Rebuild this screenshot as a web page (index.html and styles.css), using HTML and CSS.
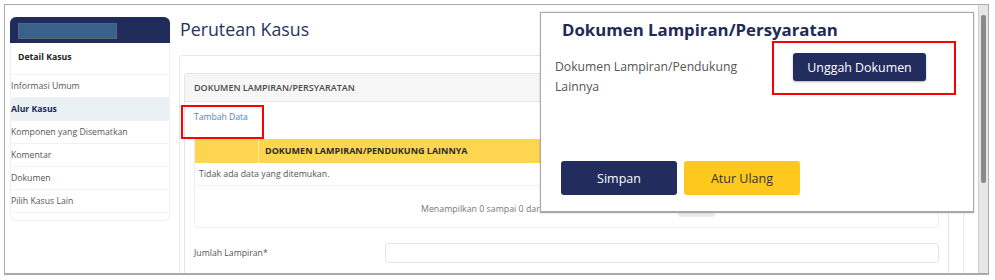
FILE: index.html
```html
<!DOCTYPE html>
<html lang="id">
<head>
    <meta charset="UTF-8">
    <title>Perutean Kasus</title>
    <link rel="stylesheet" href="styles.css">
</head>
<body>
<div class="frame">
    <div class="layout">
        <aside class="sidebar">
            <div class="sidebar-head"><div class="sidebar-logo"></div></div>
            <div class="sidebar-title">Detail Kasus</div>
            <ul class="menu">
                <li>Informasi Umum</li>
                <li class="active">Alur Kasus</li>
                <li>Komponen yang Disematkan</li>
                <li>Komentar</li>
                <li>Dokumen</li>
                <li>Pilih Kasus Lain</li>
            </ul>
        </aside>

        <main class="content">
            <h1 class="page-title">Perutean Kasus</h1>
            <div class="card">
                <div class="panel">
                    <div class="panel-head">DOKUMEN LAMPIRAN/PERSYARATAN</div>
                    <div class="panel-body">
                        <a class="add-link" href="#">Tambah Data</a>
                        <div class="grid">
                            <div class="grid-head">
                                <div class="col-no"></div>
                                <div class="col-doc">DOKUMEN LAMPIRAN/PENDUKUNG LAINNYA</div>
                            </div>
                            <div class="grid-empty">Tidak ada data yang ditemukan.</div>
                            <div class="grid-foot">
                                <span class="summary">Menampilkan 0 sampai 0 dari 0 data</span>
                                <span class="pager"></span>
                            </div>
                        </div>
                        <div class="form-row">
                            <label>Jumlah Lampiran*</label>
                            <div class="input"></div>
                        </div>
                    </div>
                </div>
            </div>
        </main>

        <div class="scrollbar"><div class="thumb"></div></div>
    </div>

    <div class="mark mark-add"></div>

    <div class="modal">
        <h2 class="modal-title">Dokumen Lampiran/Persyaratan</h2>
        <div class="modal-row">
            <p class="modal-label">Dokumen Lampiran/Pendukung Lainnya</p>
            <button class="btn btn-navy btn-upload">Unggah Dokumen</button>
        </div>
        <div class="modal-actions">
            <button class="btn btn-navy btn-wide">Simpan</button>
            <button class="btn btn-yellow btn-wide">Atur Ulang</button>
        </div>
        <div class="mark mark-upload"></div>
    </div>
</div>
</body>
</html>
```

FILE: styles.css
```css
body {
    margin: 0;
    padding: 4px;
    font-family: 'Open Sans', sans-serif;
    background: #ffffff;
    color: #555;
}
.frame {
    position: relative;
    width: 983px;
    height: 268px;
    border: 1px solid #aaa;
    border-width: 1px 1px 2px 1px;
    overflow: hidden;
}
.layout {
    display: flex;
    height: 100%;
}

/* sidebar */
.sidebar {
    width: 158px;
    margin: 12px 0 0 5px;
    height: 203px;
    border: 1px solid #eef0f2;
    border-top: none;
    border-radius: 6px;
    flex-shrink: 0;
}
.sidebar-head {
    height: 26px;
    background: #222c5b;
    border-radius: 6px 6px 0 0;
    padding: 6px 0 0 8px;
    box-sizing: border-box;
    margin: 0 -1px;
}
.sidebar-logo {
    width: 97px;
    height: 14px;
    background: #3a6189;
    border: 1px solid #5a6478;
}
.sidebar-title {
    height: 31px;
    line-height: 29px;
    padding-left: 7px;
    font-size: 8.7px;
    font-weight: 700;
    color: #222;
    border-bottom: 1px solid #f3f3f3;
}
.menu {
    list-style: none;
    margin: 0;
    padding: 0;
}
.menu li {
    height: 22px;
    line-height: 22px;
    font-size: 8.7px;
    color: #555;
    border-bottom: 1px solid #f3f3f3;
    white-space: nowrap;
}
.menu li.active {
    background: #e9f1f5;
    color: #1c2a55;
    font-weight: 700;
}

/* main */
.content {
    flex: 1;
    margin-left: 9px;
    min-width: 0;
}
.page-title {
    margin: 10px 0 0 1px;
    height: 40px;
    font-size: 17.8px;
    font-weight: 400;
    color: #27345e;
    line-height: 28px;
}
.card {
    margin-right: 14px;
    border: 1px solid #e6e8ea;
    border-radius: 3px;
    padding: 17px 14px 0 4px;
    height: 230px;
}
.panel {
    border: 1px solid #e3e5e7;
    border-radius: 3px;
    height: 100%;
}
.panel-head {
    height: 27px;
    line-height: 27px;
    background: #f6f6f7;
    border-bottom: 1px solid #e3e5e7;
    padding-left: 9px;
    font-size: 9px;
    font-weight: 600;
    color: #4a4a4a;
}
.panel-body {
    padding: 0 9px;
}
.add-link {
    display: block;
    height: 37px;
    line-height: 30px;
    font-size: 8.6px;
    color: #3b86d6;
    text-decoration: none;
}
.grid {
    border: 1px solid #eceef0;
    border-top: none;
    border-radius: 0 0 4px 4px;
    height: 88px;
}
.grid-head {
    display: flex;
    height: 24px;
    background: #fdd54f;
    font-size: 9px;
    font-weight: 700;
    color: #2b2b2b;
    line-height: 24px;
}
.col-no {
    width: 63px;
    border-right: 1px solid #fbe9a8;
}
.col-doc {
    padding-left: 6px;
}
.grid-empty {
    height: 22px;
    line-height: 22px;
    padding-left: 4px;
    font-size: 8.8px;
    color: #555;
    border-bottom: 1px solid #f3f3f3;
}
.grid-foot {
    display: flex;
    align-items: flex-start;
    padding: 15px 0 0 226px;
    font-size: 8.8px;
    color: #777;
}
.summary {
    width: 257px;
    line-height: 16px;
    white-space: nowrap;
}
.pager {
    width: 37px;
    height: 16px;
    background: #e9ecef;
    border-radius: 3px;
}
.form-row {
    display: flex;
    align-items: center;
    margin-top: 15px;
}
.form-row label {
    width: 191px;
    font-size: 8.7px;
    color: #555;
}
.input {
    flex: 1;
    height: 18px;
    border: 1px solid #e3e6e9;
    border-radius: 3px;
}

/* scrollbar */
.scrollbar {
    width: 9px;
    background: #e6e6e6;
    border-left: 1px solid #d0d0d0;
    flex-shrink: 0;
    padding-top: 10px;
}
.thumb {
    width: 5px;
    height: 168px;
    margin-left: 2px;
    background: #8a8a8a;
    border-radius: 2px;
}

/* annotations */
.mark {
    position: absolute;
    border: 2px solid #ff0000;
    box-sizing: border-box;
}
.mark-add {
    left: 176px;
    top: 100px;
    width: 83px;
    height: 34px;
}

/* modal */
.modal {
    position: absolute;
    left: 535px;
    top: 7px;
    width: 432px;
    height: 198px;
    background: #fff;
    border: 1px solid #a8a8a8;
    border-bottom-width: 2px;
    box-shadow: 0 0 2px rgba(0, 0, 0, 0.2);
}
.modal-title {
    margin: 5px 0 0 21px;
    font-size: 16.8px;
    font-weight: 700;
    color: #1f2a55;
    line-height: 24px;
}
.modal-row {
    display: flex;
    align-items: flex-start;
    margin-top: 11px;
}
.modal-label {
    width: 200px;
    margin: 4px 0 0 14px;
    font-size: 12.2px;
    line-height: 20px;
    color: #555;
}
.btn {
    border: none;
    border-radius: 3px;
    font-family: 'Open Sans', sans-serif;
    cursor: pointer;
}
.btn-navy {
    background: #222c5d;
    color: #fff;
}
.btn-yellow {
    background: #fec81d;
    color: #333;
}
.btn-upload {
    margin-left: 38px;
    width: 133px;
    height: 28px;
    font-size: 12.4px;
    box-shadow: 0 1px 2px rgba(0, 0, 0, 0.3);
}
.modal-actions {
    display: flex;
    gap: 7px;
    margin: 64px 0 0 20px;
}
.btn-wide {
    width: 116px;
    height: 34px;
    font-size: 12.5px;
}
.mark-upload {
    left: 231px;
    top: 28px;
    width: 184px;
    height: 54px;
}
```
